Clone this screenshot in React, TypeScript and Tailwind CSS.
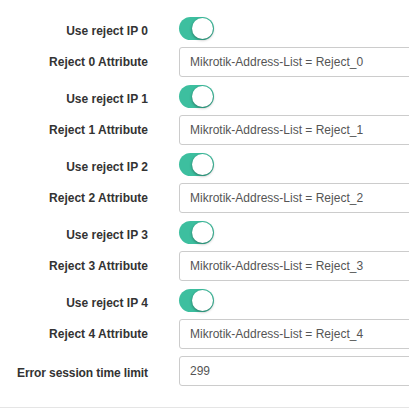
import React from "react";

function Toggle() {
  return (
    <div className="relative h-[23px] w-[35px] rounded-full bg-[#3dbf9f]">
      <div className="absolute right-[1px] top-[1px] h-[21px] w-[21px] rounded-full bg-white shadow-[0_1px_3px_rgba(0,0,0,0.4)]" />
    </div>
  );
}

function Row({
  label,
  children,
  labelClass = "",
}: {
  label: string;
  children: React.ReactNode;
  labelClass?: string;
}) {
  return (
    <div className="flex h-[34px] items-center">
      <div className={`w-[148px] shrink-0 text-right text-[12px] font-bold text-[#333] ${labelClass}`}>{label}</div>
      <div className="ml-[31px] flex items-center">{children}</div>
    </div>
  );
}

function Input({ value }: { value: string }) {
  return (
    <div className="flex h-[30px] w-[260px] items-center rounded-[3px] border border-[#ccc] bg-white pl-[10px] text-[12px] text-[#555]">
      {value}
    </div>
  );
}

export default function App() {
  const items = [0, 1, 2, 3, 4];
  return (
    <div
      className="h-[408px] w-[409px] overflow-hidden bg-white"
      style={{ fontFamily: '"Liberation Sans", Arial, sans-serif' }}
    >
      <div className="pt-[11px]">
        {items.map((i) => (
          <React.Fragment key={i}>
            <Row label={`Use reject IP ${i}`} labelClass="pt-[5px]">
              <Toggle />
            </Row>
            <Row label={`Reject ${i} Attribute`}>
              <Input value={`Mikrotik-Address-List = Reject_${i}`} />
            </Row>
          </React.Fragment>
        ))}
        <div className="mt-[3px]">
          <Row label="Error session time limit" labelClass="pt-[3px] tracking-[-0.1px]">
            <Input value="299" />
          </Row>
        </div>
      </div>
      <div className="mt-[19px] border-t border-[#e5e5e5]" />
    </div>
  );
}
